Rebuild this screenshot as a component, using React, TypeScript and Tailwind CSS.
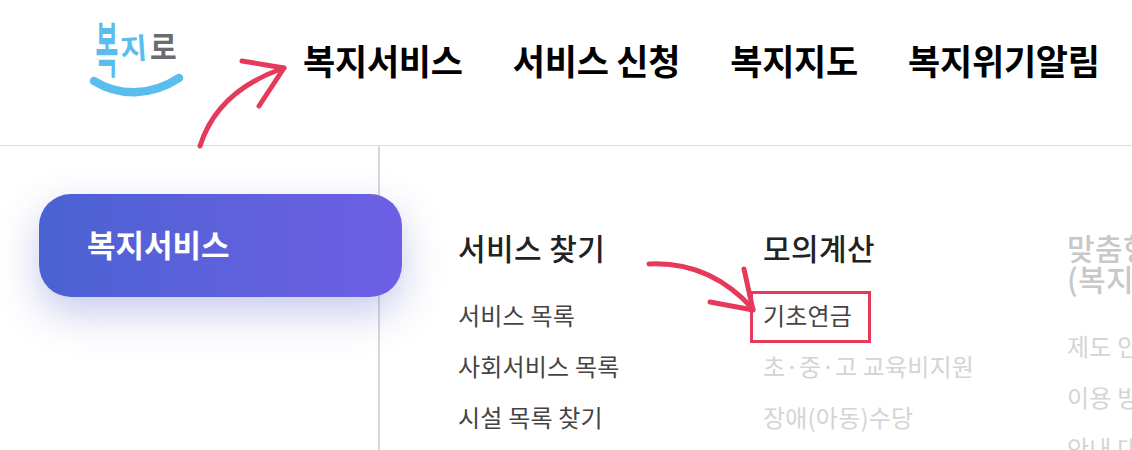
const FONT = "font-['Noto_Sans_CJK_KR','Noto_Sans',sans-serif]";

function NavItem({ children }: { children: string }) {
  return <span className="text-[35px] font-bold leading-[40px] tracking-[-0.25px] text-black whitespace-nowrap">{children}</span>;
}

function Item({ children, dim }: { children: React.ReactNode; dim?: boolean }) {
  return (
    <div className={`text-[24px] leading-[51px] tracking-[0.2px] whitespace-nowrap ${dim ? "text-[#d4d4d4]" : "text-[#444444]"}`}>
      {children}
    </div>
  );
}

function Head({ children }: { children: React.ReactNode }) {
  return (
    <div className="text-[30px] font-medium leading-[31px] tracking-[0.4px] whitespace-nowrap text-[#222222]">
      {children}
    </div>
  );
}

export default function App() {
  return (
    <div className={`relative w-[1132px] h-[450px] overflow-hidden bg-white ${FONT}`}>
      <header className="flex h-[146px] border-b border-[#dedede]">
        <div className="w-[303px] shrink-0 pl-[80px] pt-[10px]">
          <svg width="112" height="94" viewBox="80 10 112 94" fill="none" fontFamily="'Noto Sans CJK KR', sans-serif">
            <text transform="translate(95.5,72) scale(0.62,1.5)" fontSize="40" fontWeight="700" fill="#5bbcee">복</text>
            <text transform="translate(121,60) rotate(-4)" fontSize="29" fontWeight="700" fill="#5bbcee">지</text>
            <text transform="translate(150,59) scale(1,1.1)" fontSize="29" fontWeight="700" fill="#6b6b70">로</text>
            <path d="M94 81 C 118 96, 150 97, 179 78" stroke="#5bbcee" strokeWidth="8.5" strokeLinecap="round" />
          </svg>
        </div>
        <nav className="flex gap-[50px] pt-[40px] items-start">
          <NavItem>복지서비스</NavItem>
          <NavItem>서비스 신청</NavItem>
          <NavItem>복지지도</NavItem>
          <NavItem>복지위기알림</NavItem>
        </nav>
      </header>

      <div className="flex h-[304px]">
        <aside className="relative w-[380px] shrink-0 border-r-2 border-[#d8d8d8] pl-[39px] pt-[48px]">
          <div className="flex items-center w-[363px] h-[103px] pl-[48px] pb-[3px] rounded-[32px] bg-gradient-to-r from-[#4a62d2] to-[#6e5fe4] shadow-[0_16px_40px_rgba(70,80,190,0.3)] text-white text-[31px] font-bold">
            복지서비스
          </div>
        </aside>

        <div className="flex pl-[78px] pt-[86px]">
          <section className="w-[305px] shrink-0">
            <Head>서비스 찾기</Head>
            <div className="mt-[26px]">
              <Item>서비스 목록</Item>
              <Item>사회서비스 목록</Item>
              <Item>시설 목록 찾기</Item>
            </div>
          </section>
          <section className="w-[304px] shrink-0">
            <Head>모의계산</Head>
            <div className="mt-[26px]">
              <div className="relative">
                <Item>기초연금</Item>
                <div className="absolute left-[-13px] top-[2px] w-[121px] h-[52px] border-[3px] border-[#e63a5a]" />
              </div>
              <Item dim>초·중·고 교육비지원</Item>
              <Item dim>장애(아동)수당</Item>
            </div>
          </section>
          <section className="w-[304px] shrink-0">
            <div className="text-[30px] font-medium leading-[31px] tracking-[0.4px] text-[#c8c8c8] whitespace-nowrap">
              맞춤형 안내
              <br />
              (복지 상담)
            </div>
            <div className="mt-[26px]">
              <Item dim>제도 안내</Item>
              <Item dim>이용 방법</Item>
              <Item dim>안내 대상</Item>
            </div>
          </section>
        </div>
      </div>

      <svg className="absolute inset-0 pointer-events-none" width="1132" height="450" viewBox="0 0 1132 450" fill="none">
        <g stroke="#e63a5a" strokeWidth="5" strokeLinecap="round" strokeLinejoin="round">
          <path d="M200 146 C 212 108, 240 83, 284 68" />
          <path d="M242 61 L 284 68 L 259 106" />
          <path d="M649 264 C 690 262, 725 278, 753 309" />
          <path d="M744 269 L 753 310 L 710 302" />
        </g>
      </svg>
    </div>
  );
}
